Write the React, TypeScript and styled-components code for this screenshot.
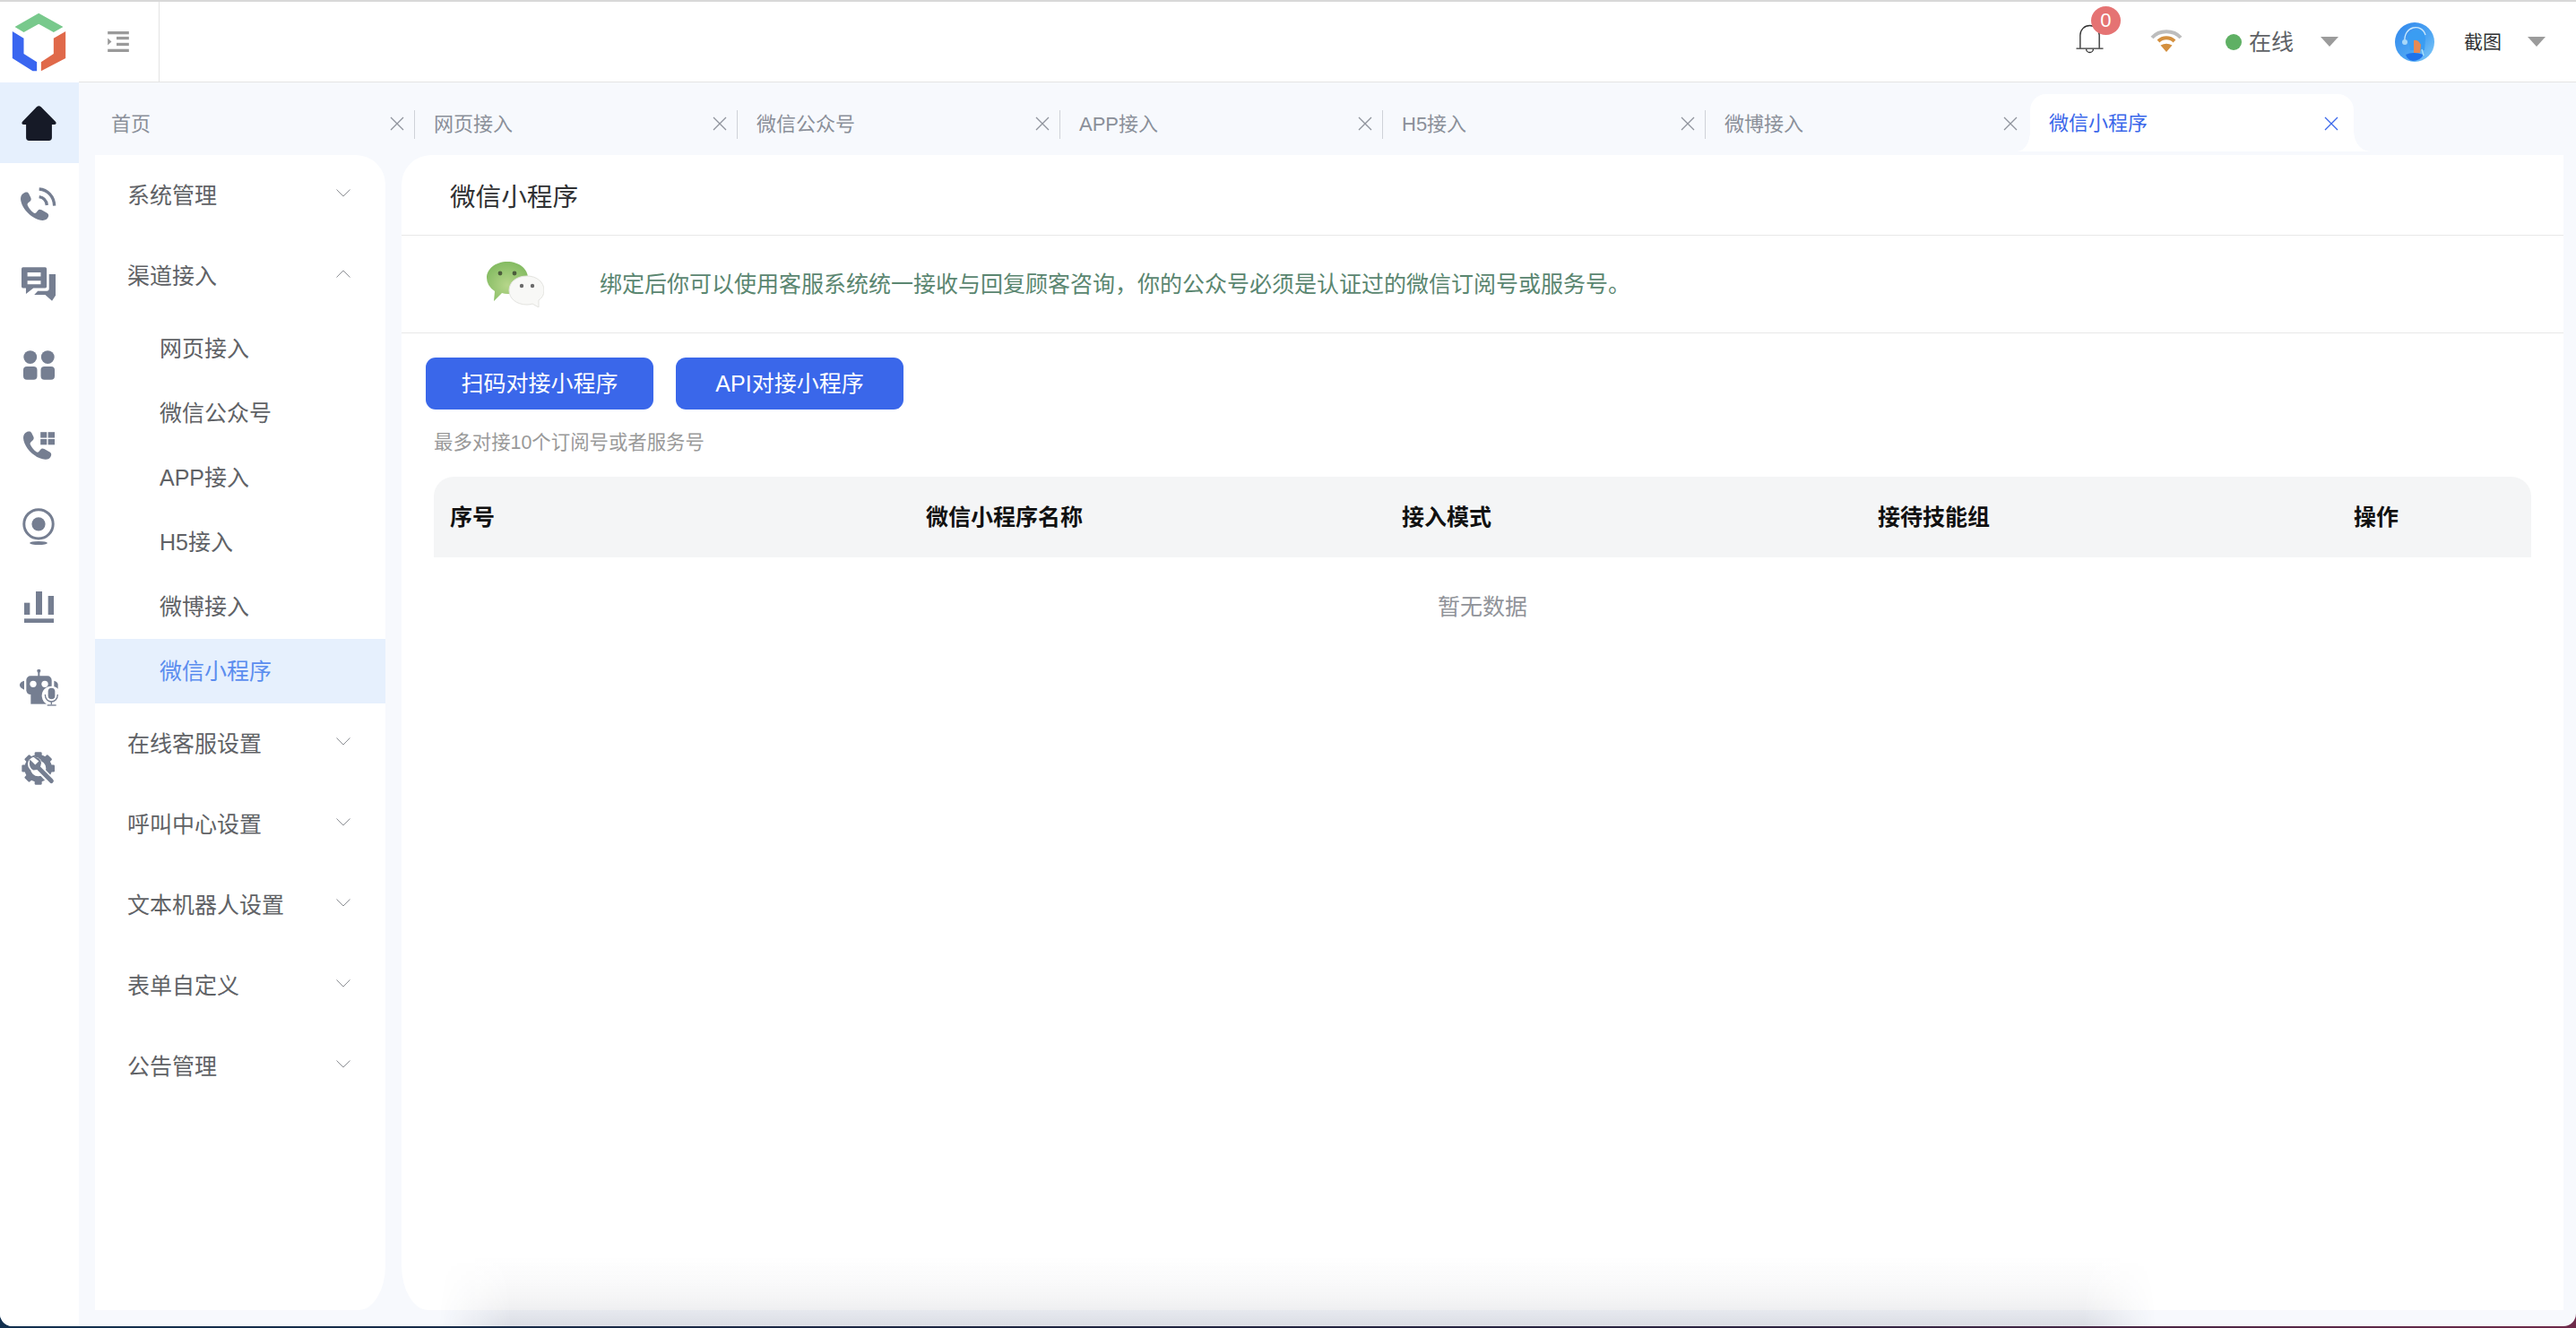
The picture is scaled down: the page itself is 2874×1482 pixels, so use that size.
import styled, { createGlobalStyle } from 'styled-components';

const GlobalStyle = createGlobalStyle`
  html, body {
    margin: 0;
    padding: 0;
    width: 2874px;
    height: 1482px;
    overflow: hidden;
    background: linear-gradient(90deg, #12304f 0%, #1d2440 40%, #2c2340 70%, #6e2a4a 100%);
    font-family: "Liberation Sans", "Noto Sans CJK SC", sans-serif;
  }
  * { box-sizing: border-box; }
`;

const Window = styled.div`
  position: relative;
  width: 2874px;
  height: 1480px;
  display: flex;
  overflow: hidden;
  background: #f7f9fd;
  border-top: 2px solid #d8d8d8;
  border-radius: 0 0 14px 14px;
`;

const Rail = styled.nav`
  width: 88px;
  flex: none;
  background: #fff;
  display: flex;
  flex-direction: column;
`;

const LogoCell = styled.div`
  height: 90px;
  padding: 12px 0 0 13px;
`;

const RailItem = styled.div<{ $active?: boolean }>`
  height: 90px;
  padding-right: 2px;
  display: flex;
  align-items: center;
  justify-content: center;
  background: ${(p) => (p.$active ? '#e6f0fd' : 'transparent')};
  svg { display: block; }
`;

const Workspace = styled.div`
  flex: 1;
  min-width: 0;
  display: flex;
  flex-direction: column;
`;

const Header = styled.header`
  height: 90px;
  flex: none;
  background: #fff;
  border-bottom: 1px solid #e4e4e4;
  display: flex;
  align-items: center;
`;

const ToggleCell = styled.div`
  width: 90px;
  height: 100%;
  border-right: 1px solid #e4e4e4;
  padding-left: 32px;
  display: flex;
  align-items: center;
`;

const HeaderRight = styled.div`
  margin-left: auto;
  padding-right: 34px;
  display: flex;
  align-items: center;
`;

const BellWrap = styled.div`
  position: relative;
  width: 31px;
  height: 33px;
  margin-top: -6px;
  svg { display: block; }
`;

const Badge = styled.span`
  position: absolute;
  left: 17px;
  top: -20px;
  width: 33px;
  height: 32px;
  border-radius: 50%;
  background: #e57373;
  color: #fff;
  font-size: 22px;
  line-height: 32px;
  text-align: center;
`;

const WifiWrap = styled.div`
  margin-left: 52px;
  margin-top: -4px;
  svg { display: block; }
`;

const StatusDot = styled.span`
  width: 18px;
  height: 18px;
  margin-left: 48px;
  border-radius: 50%;
  background: #5fb064;
`;

const StatusText = styled.span`
  margin-left: 8px;
  padding-bottom: 3px;
  font-size: 25px;
  color: #606266;
`;

const Caret = styled.span<{ $gap: number }>`
  width: 0;
  height: 0;
  margin-left: ${(p) => p.$gap}px;
  border-left: 10px solid transparent;
  border-right: 10px solid transparent;
  border-top: 11px solid #9b9b9b;
`;

const AvatarWrap = styled.div`
  margin-left: 63px;
  svg { display: block; }
`;

const UserName = styled.span`
  margin-left: 33px;
  padding-bottom: 3px;
  font-size: 21px;
  color: #303133;
`;

const TabBar = styled.div`
  height: 81px;
  flex: none;
  padding: 13px 0 0 15px;
  display: flex;
  align-items: flex-start;
`;

const Tab = styled.div`
  width: 360px;
  height: 68px;
  display: flex;
  align-items: center;
`;

const TabInner = styled.div<{ $last?: boolean }>`
  width: 100%;
  height: 32px;
  padding: 0 11px 0 21px;
  display: flex;
  align-items: center;
  justify-content: space-between;
  font-size: 22px;
  color: #8a8f99;
  border-right: 1px solid ${(p) => (p.$last ? 'transparent' : '#cfd2d8')};
  svg { margin-top: -2px; }
`;

const TabLabel = styled.span`
  padding-bottom: 6px;
`;

const ActiveTab = styled.div`
  position: relative;
  width: 361px;
  height: 64px;
  margin-left: 2px;
  padding: 2px 17px 0 21px;
  display: flex;
  align-items: center;
  justify-content: space-between;
  background: #fff;
  border-radius: 18px 18px 0 0;
  font-size: 22px;
  color: #3a67ea;

  &::before, &::after {
    content: '';
    position: absolute;
    bottom: 0;
    width: 14px;
    height: 22px;
  }
  &::before {
    left: -14px;
    background: radial-gradient(ellipse 14px 22px at 0 0, transparent 97%, #fff 100%);
  }
  &::after {
    right: -18px;
    width: 18px;
    background: radial-gradient(ellipse 18px 22px at 100% 0, transparent 97%, #fff 100%);
  }
`;

const Body = styled.div`
  flex: 1;
  min-height: 0;
  display: flex;
  gap: 18px;
  padding: 0 14px 18px 18px;
`;

const Sidebar = styled.aside`
  width: 324px;
  flex: none;
  background: #fff;
  border-radius: 0 33px 0 0;
  border-bottom-right-radius: 30px 50px;
`;

const GroupRow = styled.div`
  height: 90px;
  padding: 0 39px 4px 36px;
  display: flex;
  align-items: center;
  justify-content: space-between;
  font-size: 25px;
  color: #606266;
  svg { margin-bottom: 2px; }
`;

const SubRow = styled.div<{ $active?: boolean }>`
  height: 72px;
  padding: 0 0 4px 72px;
  display: flex;
  align-items: center;
  font-size: 25px;
  color: ${(p) => (p.$active ? '#5b8def' : '#606266')};
  background: ${(p) => (p.$active ? '#e6f0fd' : 'transparent')};
`;

const Main = styled.main`
  flex: 1;
  min-width: 0;
  background: #fff;
  border-radius: 33px 0 0 0;
  border-bottom-left-radius: 30px 50px;
  display: flex;
  flex-direction: column;
`;

const TitleBar = styled.div`
  height: 90px;
  flex: none;
  padding-left: 54px;
  display: flex;
  align-items: center;
  border-bottom: 1px solid #e8e8e8;
  font-size: 28.6px;
  color: #303133;
`;

const InfoBar = styled.div`
  height: 109px;
  flex: none;
  padding-left: 95px;
  display: flex;
  align-items: center;
  border-bottom: 1px solid #e8e8e8;
  svg { display: block; flex: none; }
`;

const InfoText = styled.span`
  margin-left: 62px;
  padding-bottom: 5px;
  font-size: 25px;
  color: #5a8670;
`;

const Content = styled.div`
  padding: 27px 36px 0 27px;
`;

const ButtonRow = styled.div`
  display: flex;
  gap: 25px;
`;

const PrimaryButton = styled.button`
  width: 254px;
  height: 58px;
  padding: 0 0 5px;
  border: 0;
  border-radius: 11px;
  background: #3a67ea;
  color: #fff;
  font: inherit;
  font-size: 25px;
`;

const Note = styled.div`
  margin: 23px 0 0 9px;
  font-size: 21.4px;
  line-height: 29px;
  color: #999;
`;

const TableWrap = styled.div`
  margin: 23px 0 0 9px;
`;

const TableHead = styled.div`
  height: 90px;
  padding: 0 0 5px 18px;
  display: grid;
  grid-template-columns: repeat(4, 531px) 1fr;
  align-items: center;
  background: #f4f5f6;
  border-radius: 22px 22px 0 0;
  font-size: 25px;
  font-weight: 700;
  color: #111;
`;

const EmptyRow = styled.div`
  height: 108px;
  padding-bottom: 3px;
  display: flex;
  align-items: center;
  justify-content: center;
  font-size: 25px;
  color: #909399;
`;

const DockShadow = styled.div`
  position: absolute;
  left: 490px;
  top: 1393px;
  width: 1915px;
  height: 85px;
  pointer-events: none;
  background: linear-gradient(
    180deg,
    rgba(25, 30, 55, 0) 8%,
    rgba(25, 30, 55, 0.025) 41%,
    rgba(25, 30, 55, 0.045) 61%,
    rgba(25, 30, 55, 0.065) 76%,
    rgba(25, 30, 55, 0.115) 97%
  );
  -webkit-mask-image: linear-gradient(90deg, transparent 0, #000 80px, #000 calc(100% - 80px), transparent 100%);
  mask-image: linear-gradient(90deg, transparent 0, #000 80px, #000 calc(100% - 80px), transparent 100%);
`;

const Logo = () => (
  <svg width="61" height="66" viewBox="38 42 182 198">
    <path fill="#78c98c" d="M128 44 L210 90 L178 108 L128 80 L78 108 L48 90 Z" />
    <path fill="#3a66f0" d="M40 105 L78 128 V180 L122 208 V238 H108 L40 195 Z" />
    <path fill="#e0694a" d="M218 105 V195 L136 238 V208 L178 180 V128 Z" />
  </svg>
);

const ToggleIcon = () => (
  <svg width="24" height="23" viewBox="360 98 72 70" fill="#9a9a9a">
    <rect x="360" y="98" width="72" height="10" />
    <rect x="390" y="116" width="42" height="10" />
    <rect x="390" y="137" width="42" height="10" />
    <rect x="360" y="158" width="72" height="10" />
    <path d="M360 121 L373 133 L360 145 Z" />
  </svg>
);

const HomeIcon = () => (
  <svg width="39" height="39" viewBox="72 350 115 115" fill="#161a27">
    <path d="M122 354 Q129 348 136 354 L184 402 Q190 412 178 412 H172 V455 Q172 465 162 465 H97 Q87 465 87 455 V412 H81 Q69 412 75 402 Z" />
  </svg>
);

const handset =
  'M14 2 C4 6 0 14 0 24 C2 58 42 98 78 100 C88 100 96 94 98 86 C100 80 97 76 92 73 L74 63 C68 60 64 61 60 66 L55 72 C52 75 49 75 46 73 C36 66 30 58 25 48 C23 44 24 41 27 38 L33 33 C37 29 38 25 36 20 L29 6 C26 0 20 0 14 2 Z';

const CallIcon = () => (
  <svg width="40" height="37" viewBox="0 0 120 111" fill="#757e91">
    <path d={handset} transform="translate(0 16) scale(0.95)" />
    <path fill="none" stroke="#757e91" strokeWidth="10" d="M62 6 C90 8 112 30 113 62" />
    <path fill="none" stroke="#757e91" strokeWidth="10" d="M62 32 C76 34 86 44 88 60" />
  </svg>
);

const ChatIcon = () => (
  <svg width="38" height="38" viewBox="75 905 115 113" fill="#757e91">
    <path
      fillRule="evenodd"
      d="M80 905 H155 a5 5 0 0 1 5 5 V970 a5 5 0 0 1 -5 5 H115 L90 995 V975 H80 a5 5 0 0 1 -5 -5 V910 a5 5 0 0 1 5 -5 Z M95 922 H140 V936 H95 Z M95 950 H140 V962 H95 Z"
    />
    <path d="M168 928 H190 V1000 L178 1018 L155 998 H118 L130 985 H160 a8 8 0 0 0 8 -8 Z" />
  </svg>
);

const AppsIcon = () => (
  <svg width="35" height="33" viewBox="77 1172 104 97" fill="#757e91">
    <circle cx="100" cy="1194" r="22" />
    <circle cx="158" cy="1194" r="22" />
    <rect x="77" y="1225" width="46" height="44" rx="12" />
    <rect x="135" y="1225" width="46" height="44" rx="12" />
  </svg>
);

const CallGridIcon = () => (
  <svg width="35" height="32" viewBox="78 5 104 94" fill="#757e91">
    <path d={handset} transform="translate(78 5) scale(0.94)" />
    <rect x="135" y="8" width="21" height="19" />
    <rect x="160" y="8" width="22" height="19" />
    <rect x="135" y="31" width="21" height="19" />
    <rect x="160" y="31" width="22" height="19" />
  </svg>
);

const WebcamIcon = () => (
  <svg width="38" height="43" viewBox="72 255 114 130" fill="#757e91">
    <circle cx="129" cy="312" r="49" fill="none" stroke="#757e91" strokeWidth="9" />
    <circle cx="129" cy="312" r="23" />
    <ellipse cx="129" cy="376" rx="30" ry="6" />
  </svg>
);

const BarsIcon = () => (
  <svg width="33" height="35" viewBox="78 537 99 105" fill="#757e91">
    <rect x="78" y="575" width="19" height="40" />
    <rect x="117" y="537" width="21" height="78" />
    <rect x="158" y="552" width="19" height="63" />
    <rect x="78" y="628" width="99" height="14" />
  </svg>
);

const RobotIcon = () => (
  <svg width="43" height="41" viewBox="63 800 129 123" fill="#757e91">
    <circle cx="127" cy="805" r="6" />
    <rect x="124" y="805" width="6" height="20" />
    <rect x="85" y="822" width="85" height="62" rx="14" />
    <rect x="100" y="884" width="52" height="32" />
    <path d="M78 838 V868 Q62 862 63 852 Q63 843 78 838 Z" />
    <path d="M178 838 Q192 843 191 852 V868 H178 Z" />
    <circle cx="108" cy="849" r="11" fill="#fff" />
    <circle cx="147" cy="849" r="11" fill="#fff" />
    <circle cx="169" cy="888" r="32" fill="#fff" />
    <rect x="158" y="862" width="23" height="38" rx="11.5" />
    <path d="M148 884 C148 916 190 916 190 884" fill="none" stroke="#757e91" strokeWidth="4" />
    <rect x="167" y="908" width="4" height="10" />
    <rect x="155" y="918" width="30" height="4" />
  </svg>
);

const GearToolIcon = () => (
  <svg width="38" height="37" viewBox="72 1075 114 110" fill="#757e91">
    <circle cx="128" cy="1130" r="36" fill="none" stroke="#757e91" strokeWidth="20" />
    {[0, 45, 90, 135, 180, 225, 270, 315].map((deg) => (
      <rect key={deg} x="116" y="1075" width="24" height="20" rx="4" transform={`rotate(${deg} 128 1130)`} />
    ))}
    <path d="M128 1128 L170 1172" stroke="#fff" strokeWidth="26" />
    <circle cx="117" cy="1116" r="24" fill="#fff" />
    <path d="M128 1128 L172 1172" stroke="#757e91" strokeWidth="15" strokeLinecap="round" />
    <path d="M100 1100 L118 1118 L130 1106 L112 1092 Q134 1090 138 1112 Q136 1136 112 1136 Q94 1128 100 1100 Z" />
  </svg>
);

const Chevron = ({ up }: { up?: boolean }) => (
  <svg width="16" height="9" viewBox="0 0 16 9" fill="none" stroke="#8c8f94" strokeWidth="1">
    <path d={up ? 'M0.5 8.5 L8 1 L15.5 8.5' : 'M0.5 0.5 L8 8 L15.5 0.5'} />
  </svg>
);

const CloseIcon = ({ color = '#8f939c' }: { color?: string }) => (
  <svg width="16" height="16" viewBox="0 0 16 16" fill="none" stroke={color} strokeWidth="1.3">
    <path d="M1 1 L15 15 M15 1 L1 15" />
  </svg>
);

const BellIcon = () => (
  <svg width="31" height="33" viewBox="0 0 32 33" fill="none" stroke="#333" strokeWidth="1.4">
    <path d="M5 27 V12 a11 11 0 0 1 22 0 V27" />
    <path d="M0.5 27.5 H31.5" />
    <path d="M12 28 a4 4 0 0 0 8 0" />
  </svg>
);

const WifiIcon = () => (
  <svg width="36" height="27" viewBox="0 0 36 27" fill="none">
    <path d="M2 11 C10 2 26 2 34 11" stroke="#bdbdbd" strokeWidth="4" />
    <path d="M9 15 C14 10 22 10 27 15" stroke="#d4903f" strokeWidth="4" />
    <path d="M11.5 19.5 Q18 16 24.5 19.5 L18 27 Z" fill="#d4903f" />
  </svg>
);

const AvatarIcon = () => (
  <svg width="44" height="44" viewBox="0 0 44 44">
    <defs>
      <linearGradient id="avatarBg" x1="0" y1="0" x2="1" y2="1">
        <stop offset="0" stopColor="#2f86ec" />
        <stop offset="0.6" stopColor="#4ea6f3" />
        <stop offset="1" stopColor="#86cdf8" />
      </linearGradient>
    </defs>
    <circle cx="22" cy="22" r="22" fill="url(#avatarBg)" />
    <path d="M15 18 C15 5 34 5 34 18 L33 31 L17 31 Z" fill="#3a9df2" />
    <path d="M11 22 C9 4 30 0 34 14" fill="none" stroke="#cde9fb" strokeWidth="1.3" />
    <circle cx="11" cy="22" r="3" fill="#a9d8f9" />
    <path d="M21 20 Q26 19 29 25 L28 34 H21 Z" fill="#e58a55" />
    <path d="M12 36 Q20 32 32 36 Q28 43 20 43 Q14 42 12 36 Z" fill="#1f72ea" />
    <path d="M30 30 L32 37" stroke="#a6e0fb" strokeWidth="1.4" />
  </svg>
);

const WechatIcon = () => (
  <svg width="64" height="51" viewBox="0 0 64 51">
    <defs>
      <radialGradient id="wxGreen" cx="0.5" cy="0.6" r="0.6">
        <stop offset="0" stopColor="#b6d68a" />
        <stop offset="1" stopColor="#84bb62" />
      </radialGradient>
    </defs>
    <path d="M8 44 L9 33 Q0 27 0 18 C0 8 10 0 23 0 C36 0 46 8 46 18 C46 29 36 36 23 36 Q20 36 17 35 Z" fill="url(#wxGreen)" />
    <circle cx="15" cy="13" r="2.4" fill="#4c5c3c" />
    <circle cx="31" cy="13" r="2.4" fill="#4c5c3c" />
    <path d="M58 51 L51 47 Q48 48 45 48 C33 48 25 41 25 32 C25 23 33 16 45 16 C56 16 64 23 64 32 Q64 39 58 43 Z" fill="#f8f8f6" stroke="#e3e3df" strokeWidth="1" />
    <circle cx="39" cy="27" r="2.2" fill="#6a6a6a" />
    <circle cx="51" cy="27" r="2.2" fill="#6a6a6a" />
  </svg>
);

const railIcons = [HomeIcon, CallIcon, ChatIcon, AppsIcon, CallGridIcon, WebcamIcon, BarsIcon, RobotIcon, GearToolIcon];
const tabs = ['首页', '网页接入', '微信公众号', 'APP接入', 'H5接入', '微博接入'];
const subItems = ['网页接入', '微信公众号', 'APP接入', 'H5接入', '微博接入'];
const lowerGroups = ['在线客服设置', '呼叫中心设置', '文本机器人设置', '表单自定义', '公告管理'];
const columns = ['序号', '微信小程序名称', '接入模式', '接待技能组', '操作'];

export default function App() {
  return (
    <>
      <GlobalStyle />
      <Window>
        <Rail>
          <LogoCell>
            <Logo />
          </LogoCell>
          {railIcons.map((Icon, i) => (
            <RailItem key={i} $active={i === 0}>
              <Icon />
            </RailItem>
          ))}
        </Rail>
        <Workspace>
          <Header>
            <ToggleCell>
              <ToggleIcon />
            </ToggleCell>
            <HeaderRight>
              <BellWrap>
                <BellIcon />
                <Badge>0</Badge>
              </BellWrap>
              <WifiWrap>
                <WifiIcon />
              </WifiWrap>
              <StatusDot />
              <StatusText>在线</StatusText>
              <Caret $gap={30} />
              <AvatarWrap>
                <AvatarIcon />
              </AvatarWrap>
              <UserName>截图</UserName>
              <Caret $gap={29} />
            </HeaderRight>
          </Header>
          <TabBar>
            {tabs.map((t, i) => (
              <Tab key={t}>
                <TabInner $last={i === tabs.length - 1}>
                  <TabLabel>{t}</TabLabel>
                  <CloseIcon />
                </TabInner>
              </Tab>
            ))}
            <ActiveTab>
              <TabLabel>微信小程序</TabLabel>
              <CloseIcon color="#3a67ea" />
            </ActiveTab>
          </TabBar>
          <Body>
            <Sidebar>
              <GroupRow>
                系统管理
                <Chevron />
              </GroupRow>
              <GroupRow>
                渠道接入
                <Chevron up />
              </GroupRow>
              {subItems.map((s) => (
                <SubRow key={s}>{s}</SubRow>
              ))}
              <SubRow $active>微信小程序</SubRow>
              {lowerGroups.map((g) => (
                <GroupRow key={g}>
                  {g}
                  <Chevron />
                </GroupRow>
              ))}
            </Sidebar>
            <Main>
              <TitleBar>微信小程序</TitleBar>
              <InfoBar>
                <WechatIcon />
                <InfoText>绑定后你可以使用客服系统统一接收与回复顾客咨询，你的公众号必须是认证过的微信订阅号或服务号。</InfoText>
              </InfoBar>
              <Content>
                <ButtonRow>
                  <PrimaryButton>扫码对接小程序</PrimaryButton>
                  <PrimaryButton>API对接小程序</PrimaryButton>
                </ButtonRow>
                <Note>最多对接10个订阅号或者服务号</Note>
                <TableWrap>
                  <TableHead>
                    {columns.map((c) => (
                      <span key={c}>{c}</span>
                    ))}
                  </TableHead>
                  <EmptyRow>暂无数据</EmptyRow>
                </TableWrap>
              </Content>
            </Main>
          </Body>
        </Workspace>
        <DockShadow />
      </Window>
    </>
  );
}
